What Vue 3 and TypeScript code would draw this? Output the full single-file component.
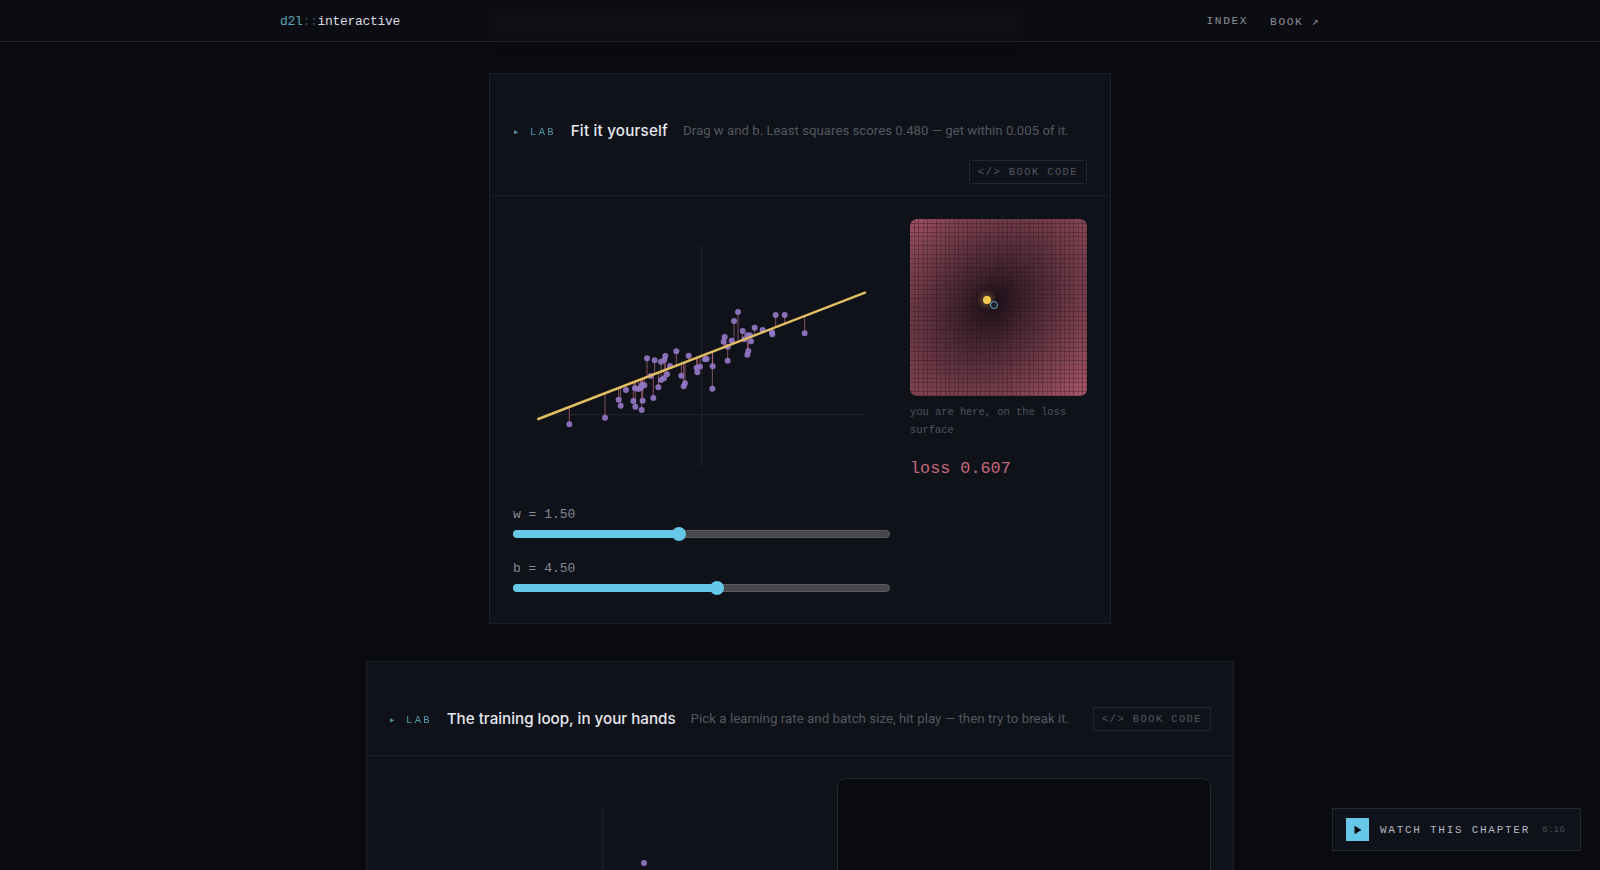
<script setup lang="ts">
import { onMounted, ref } from 'vue'

// Sampled positions in the 377×274 chart
const raw: [number, number][] = [
  [178,463],[285,443],[326,389],[332,407],[348,360],[370,393],[376,410],[375,355],[385,357],[392,355],
  [398,392],[395,420],[396,345],[403,346],[411,265],[422,318],[430,384],[434,271],[445,352],[453,275],
  [453,330],[462,325],[466,258],[463,270],[471,313],[480,288],[499,244],[514,317],[521,349],[525,340],
  [536,257],[560,293],[562,307],[570,290],[585,268],[590,267],[608,289],[607,356],[641,215],[644,201],
  [653,272],[653,230],[665,212],[672,153],[684,126],[698,183],[703,208],[712,196],[720,196],[723,214],
  [715,243],[712,254],[734,173],[758,180],[786,187],[787,193],[797,135],[824,135],[884,190]
]
const line = { x1: 25.3, y1: 200, x2: 352, y2: 73.7 }
const lineY = (x: number) => line.y1 + ((x - line.x1) * (line.y2 - line.y1)) / (line.x2 - line.x1)
const points = raw.map(([zx, zy]) => {
  const x = zx / 3 - 3
  const y = zy / 3 + 51
  return { x, y, fy: lineY(x) }
})

const surface = ref<HTMLCanvasElement | null>(null)

onMounted(() => {
  const c = surface.value
  const ctx = c?.getContext('2d')
  if (!c || !ctx) return
  const n = 40
  const size = c.width / n
  const low = [24, 14, 22]
  const high = [168, 86, 104]
  ctx.fillStyle = '#1e1219'
  ctx.fillRect(0, 0, c.width, c.height)
  for (let i = 0; i < n; i++) {
    for (let j = 0; j < n; j++) {
      const u = (i + 0.5) / n - 0.47
      const v = (j + 0.5) / n - 0.48
      const d = Math.sqrt(u * u + v * v + 0.5 * u * v)
      const t = Math.min(1, Math.pow(d / 0.82, 0.85))
      const [r, g, b] = low.map((l, k) => Math.round(l + (high[k] - l) * t))
      ctx.fillStyle = `rgb(${r},${g},${b})`
      ctx.fillRect(i * size, j * size, size - 0.18, size - 0.18)
    }
  }
})
</script>

<template>
  <div class="page">
    <header class="nav">
      <div class="nav-smear" aria-hidden="true"></div>
      <div class="nav-inner">
        <div class="logo"><span class="logo-a">d2l</span><span class="logo-b">::</span>interactive</div>
        <nav class="links">
          <span>INDEX</span>
          <span>BOOK ↗</span>
        </nav>
      </div>
    </header>

    <main class="main">
      <section class="card card-fit">
        <div class="head head-fit">
          <span class="tag">▸ LAB</span>
          <h2 class="title">Fit it yourself</h2>
          <p class="sub">Drag w and b. Least squares scores 0.480 — get within 0.005 of it.</p>
          <span class="code">&lt;/&gt; BOOK CODE</span>
        </div>
        <div class="body body-fit">
          <div class="left">
            <svg class="chart" width="377" height="274" viewBox="0 0 377 274">
              <line x1="25" y1="195.7" x2="352" y2="195.7" class="axis" />
              <line x1="188.7" y1="26" x2="188.7" y2="248" class="axis" />
              <line
                v-for="(p, i) in points"
                :key="'r' + i"
                :x1="p.x"
                :y1="p.y"
                :x2="p.x"
                :y2="p.fy"
                class="resid"
              />
              <circle v-for="(p, i) in points" :key="'p' + i" :cx="p.x" :cy="p.y" r="3" class="pt" />
              <line :x1="line.x1" :y1="line.y1" :x2="line.x2" :y2="line.y2" class="fit" />
            </svg>
            <div class="slider">
              <div class="s-label">w = 1.50</div>
              <div class="track">
                <div class="fill fill-w"></div>
                <div class="thumb thumb-w"></div>
              </div>
            </div>
            <div class="slider">
              <div class="s-label">b = 4.50</div>
              <div class="track">
                <div class="fill fill-b"></div>
                <div class="thumb thumb-b"></div>
              </div>
            </div>
          </div>
          <aside class="side">
            <div class="surface">
              <canvas ref="surface" width="177" height="177"></canvas>
              <span class="dot-glow"></span>
              <span class="dot-now"></span>
              <span class="dot-best"></span>
            </div>
            <p class="caption">you are here, on the loss surface</p>
            <div class="loss">loss 0.607</div>
          </aside>
        </div>
      </section>

      <section class="card card-loop">
        <div class="head head-loop">
          <span class="tag">▸ LAB</span>
          <h2 class="title">The training loop, in your hands</h2>
          <p class="sub">Pick a learning rate and batch size, hit play — then try to break it.</p>
          <span class="code">&lt;/&gt; BOOK CODE</span>
        </div>
        <div class="body body-loop">
          <svg class="chart" width="428" height="340" viewBox="0 0 428 340">
            <line x1="214" y1="30" x2="214" y2="340" class="axis" />
            <circle cx="255" cy="85" r="3" class="pt" />
          </svg>
          <div class="console"></div>
        </div>
      </section>
    </main>

    <aside class="watch">
      <span class="play">
        <svg width="8" height="10" viewBox="0 0 8 10"><path d="M0.5 0.8 L7.5 5 L0.5 9.2 Z" fill="#0a0b10" /></svg>
      </span>
      <span class="watch-text">WATCH THIS CHAPTER</span>
      <span class="watch-time">8:16</span>
    </aside>
  </div>
</template>

<style>
html,
body {
  margin: 0;
  background: #0a0b10;
  overflow: hidden;
}
</style>

<style scoped>
.page {
  height: 100vh;
  overflow: hidden;
  background: #0a0b10;
  font-family: 'Roboto', 'Liberation Sans', sans-serif;
  display: flex;
  flex-direction: column;
}
.nav {
  position: relative;
  flex: none;
  height: 41px;
  background: #0c0d12;
  border-bottom: 1px solid #24262f;
}
.nav-smear {
  position: absolute;
  left: 492px;
  width: 528px;
  top: 13px;
  height: 24px;
  background: #101116;
  filter: blur(6px);
}
.nav-inner {
  position: relative;
  width: 1040px;
  height: 100%;
  margin: 0 auto;
  display: flex;
  align-items: center;
  justify-content: space-between;
  font-family: 'Liberation Mono', monospace;
}
.logo {
  padding-top: 1px;
  font-size: 13px;
  letter-spacing: -0.3px;
  color: #d9dbe1;
}
.logo-a {
  color: #5fa3b6;
}
.logo-b {
  color: #3c4855;
}
.links {
  display: flex;
  gap: 22px;
  padding-top: 1px;
  font-size: 11.2px;
  letter-spacing: 1.6px;
  color: #8b8f9b;
}
.main {
  flex: 1;
  min-height: 0;
  padding-top: 31px;
  display: flex;
  flex-direction: column;
  align-items: center;
  gap: 37px;
}
.card {
  flex: none;
  box-sizing: border-box;
  background: #10121a;
  border: 1px solid #1e2029;
}
.card-fit {
  width: 622px;
}
.card-loop {
  width: 868px;
}
.head {
  display: flex;
  flex-wrap: wrap;
  align-items: center;
  column-gap: 15px;
  row-gap: 17px;
  padding: 45px 23px 11px;
  border-bottom: 1px solid #1c1e27;
}
.head-loop {
  padding: 45px 22px 24px;
}
.tag {
  font-family: 'Liberation Mono', monospace;
  font-size: 10.4px;
  letter-spacing: 2.3px;
  color: #5fb0c4;
  opacity: 0.85;
  white-space: pre;
}
.title {
  margin: 0;
  font-family: 'Inter', sans-serif;
  font-size: 15.2px;
  font-weight: 500;
  line-height: 24px;
  color: #e6e8ee;
}
.head-fit .title {
  letter-spacing: 0.2px;
}
.head-loop .title {
  letter-spacing: -0.01px;
}
.sub {
  margin: 0;
  font-size: 13.22px;
  line-height: 24px;
  color: #53575f;
}
.head-loop .sub {
  font-size: 13.35px;
}
.code {
  margin-left: auto;
  box-sizing: border-box;
  height: 24px;
  padding: 1px 8px 0;
  border: 1px solid #23252f;
  font-family: 'Liberation Mono', monospace;
  font-size: 10.4px;
  line-height: 21px;
  letter-spacing: 1.45px;
  color: #53575f;
}
.body-fit {
  padding: 23px 23px 11px;
  display: grid;
  grid-template-columns: 377px 177px;
  column-gap: 20px;
}
.body-loop {
  padding: 22px;
  display: grid;
  grid-template-columns: 428px 374px;
  column-gap: 20px;
}
.chart {
  display: block;
}
.left .chart {
  margin-bottom: 12px;
}
.axis {
  stroke: #23252e;
  stroke-width: 1;
}
.resid {
  stroke: #d07a88;
  stroke-width: 1;
  opacity: 0.6;
}
.pt {
  fill: #9378c6;
  opacity: 0.9;
}
.fit {
  stroke: #e2bf62;
  stroke-width: 2.5;
  stroke-linecap: round;
}
.slider {
  margin-bottom: 20.5px;
}
.s-label {
  font-family: 'Liberation Mono', monospace;
  font-size: 13px;
  line-height: 20px;
  color: #848892;
}
.track {
  position: relative;
  box-sizing: border-box;
  height: 8px;
  margin-top: 5px;
  border-radius: 4px;
  background: #47474c;
  border: 1px solid #5a5a5f;
}
.fill {
  position: absolute;
  left: -1px;
  top: -1px;
  bottom: -1px;
  border-radius: 4px;
  background: #66c8e9;
}
.fill-w {
  width: 166px;
}
.fill-b {
  width: 204px;
}
.thumb {
  position: absolute;
  top: 50%;
  width: 14px;
  height: 14px;
  margin: -7px 0 0 -7px;
  border-radius: 50%;
  background: #66c8e9;
}
.thumb-w {
  left: 165px;
}
.thumb-b {
  left: 203px;
}
.surface {
  position: relative;
  width: 177px;
  height: 177px;
}
.surface canvas {
  display: block;
  border-radius: 7px;
}
.dot-glow,
.dot-now,
.dot-best {
  position: absolute;
  border-radius: 50%;
}
.dot-glow {
  left: 67px;
  top: 71px;
  width: 20px;
  height: 20px;
  background: radial-gradient(circle, rgba(240, 200, 80, 0.35), rgba(240, 200, 80, 0) 70%);
}
.dot-now {
  left: 73px;
  top: 77px;
  width: 8px;
  height: 8px;
  background: #f0c850;
}
.dot-best {
  box-sizing: border-box;
  left: 80px;
  top: 82px;
  width: 8px;
  height: 8px;
  border: 1.6px solid #6aaecb;
  background: #1a1a28;
}
.caption {
  margin: 8px 0 0;
  font-family: 'Liberation Mono', monospace;
  font-size: 10.4px;
  line-height: 17.7px;
  color: #50545f;
}
.loss {
  margin-top: 20px;
  font-family: 'Liberation Mono', monospace;
  font-size: 16.8px;
  line-height: 20px;
  color: #c4687a;
}
.console {
  box-sizing: border-box;
  height: 340px;
  border: 1px solid #23252f;
  border-radius: 8px;
  background: #0a0b0f;
}
.watch {
  position: fixed;
  right: 19px;
  bottom: 19px;
  box-sizing: border-box;
  height: 43px;
  display: flex;
  align-items: center;
  padding: 0 15px 0 13px;
  background: #10121a;
  border: 1px solid #23252f;
  font-family: 'Liberation Mono', monospace;
}
.play {
  width: 23px;
  height: 23px;
  margin-right: 11px;
  display: flex;
  align-items: center;
  justify-content: center;
  background: #66c8e9;
}
.watch-text {
  font-size: 11px;
  letter-spacing: 1.73px;
  color: #b4b7c0;
}
.watch-time {
  margin-left: 12px;
  font-size: 9.6px;
  color: #474a54;
}
</style>
